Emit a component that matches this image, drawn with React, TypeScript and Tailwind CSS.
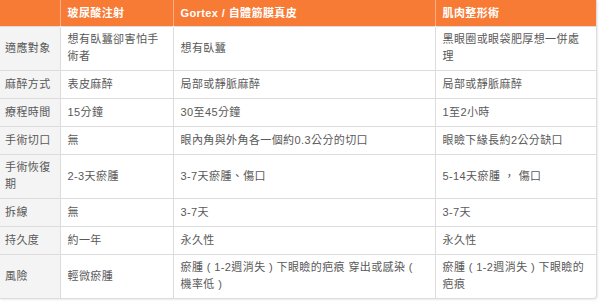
import React from 'react';

const rows: { label: string; cells: string[]; tall?: boolean }[] = [
  { label: '適應對象', cells: ['想有臥蠶卻害怕手術者', '想有臥蠶', '黑眼圈或眼袋肥厚想一併處理'], tall: true },
  { label: '麻醉方式', cells: ['表皮麻醉', '局部或靜脈麻醉', '局部或靜脈麻醉'] },
  { label: '療程時間', cells: ['15分鐘', '30至45分鐘', '1至2小時'] },
  { label: '手術切口', cells: ['無', '眼內角與外角各一個約0.3公分的切口', '眼瞼下緣長約2公分缺口'] },
  { label: '手術恢復期', cells: ['2-3天瘀腫', '3-7天瘀腫、傷口', '5-14天瘀腫 ， 傷口'], tall: true },
  { label: '拆線', cells: ['無', '3-7天', '3-7天'] },
  { label: '持久度', cells: ['約一年', '永久性', '永久性'] },
  { label: '風險', cells: ['輕微瘀腫', '瘀腫 ( 1-2週消失 ) 下眼瞼的疤痕 穿出或感染 ( 機率低 )', '瘀腫 ( 1-2週消失 ) 下眼瞼的疤痕'], tall: true },
];

const headers = ['玻尿酸注射', 'Gortex / 自體筋膜真皮', '肌肉整形術'];

const App: React.FC = () => {
  return (
    <div className="w-[600px] h-[302px] bg-white overflow-hidden font-['Liberation_Sans','Noto_Sans_CJK_TC',sans-serif]">
      <div className="w-[597px] border-r border-b border-[#dcdcdc] rounded-br-[4px] overflow-hidden shadow-[1px_1px_2px_rgba(0,0,0,0.08)]">
        <table className="w-[596px] table-fixed border-collapse text-[11px] tracking-[0.4px] text-[#595959]">
          <colgroup>
            <col className="w-[60px]" />
            <col className="w-[113px]" />
            <col className="w-[262px]" />
            <col className="w-[161px]" />
          </colgroup>
          <thead>
            <tr className="h-[26px] bg-[#f77a35] text-white font-bold">
              <th className="border-r border-white/40"></th>
              {headers.map((h, i) => (
                <th
                  key={i}
                  className={`text-left font-bold px-[7px] ${i < 2 ? 'border-r border-white/40' : ''}`}
                >
                  {h}
                </th>
              ))}
            </tr>
          </thead>
          <tbody>
            {rows.map((r, i) => (
              <tr key={i} className={`${r.tall ? 'h-[44px]' : 'h-[28px]'} border-t border-[#dcdcdc]`}>
                <td className="bg-[#f4f4f4] pl-[5px] pr-[6px] leading-[17px] align-middle border-r border-[#dcdcdc]">
                  {r.label}
                </td>
                {r.cells.map((c, j) => (
                  <td
                    key={j}
                    className={`px-[7px] leading-[17px] align-middle ${j < 2 ? 'border-r border-[#dcdcdc]' : ''}`}
                  >
                    {c}
                  </td>
                ))}
              </tr>
            ))}
          </tbody>
        </table>
      </div>
    </div>
  );
};

export default App;
